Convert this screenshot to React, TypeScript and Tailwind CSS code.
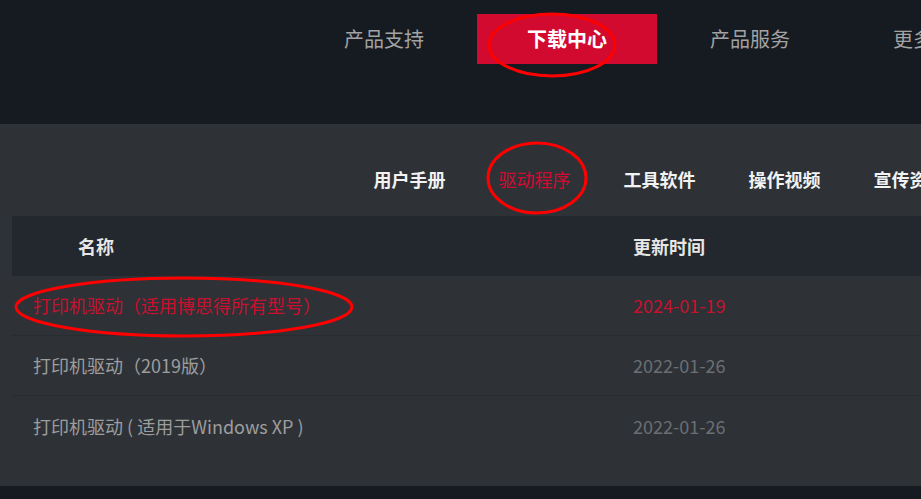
const topNav = ["产品支持", "下载中心", "产品服务", "更多产品"];
const subNav = ["用户手册", "驱动程序", "工具软件", "操作视频", "宣传资料"];

const rows = [
  { name: "打印机驱动（适用博思得所有型号）", date: "2024-01-19", active: true },
  { name: "打印机驱动（2019版）", date: "2022-01-26", active: false },
  { name: "打印机驱动 ( 适用于Windows XP )", date: "2022-01-26", active: false },
];

export default function App() {
  return (
    <div
      className="relative h-[499px] w-full overflow-hidden bg-[#161a21]"
      style={{ fontFamily: '"Noto Sans CJK SC", "Noto Sans", sans-serif' }}
    >
      {/* top nav */}
      <div className="h-[124px] bg-[#161a21]">
        <div className="flex gap-[3px] pl-[294px] pt-[14px]">
          {topNav.map((item) => {
            const active = item === "下载中心";
            return (
              <div
                key={item}
                className={
                  active
                    ? "flex h-[50px] w-[180px] shrink-0 items-center justify-center bg-[#d20a30] text-[20px] font-bold text-white"
                    : "flex h-[50px] w-[180px] shrink-0 items-center justify-center text-[20px] text-[#a3a3a3]"
                }
              >
                {item}
              </div>
            );
          })}
        </div>
      </div>

      {/* content */}
      <div className="bg-[#2e3237] pb-[30px]">
        <div className="flex pb-[25px] pl-[347px] pt-[43px]">
          {subNav.map((item) => (
            <div
              key={item}
              className={
                item === "驱动程序"
                  ? "w-[125px] shrink-0 text-center text-[18px] leading-[24px] text-[#d20a30]"
                  : "w-[125px] shrink-0 text-center text-[18px] font-bold leading-[24px] text-[#f2f2f2]"
              }
            >
              {item}
            </div>
          ))}
        </div>

        <div className="ml-[12px]">
          <div className="flex h-[60px] items-center bg-[#23282e] text-[18px] font-bold text-[#e6e6e6]">
            <div className="w-[621px] shrink-0 pl-[66px]">名称</div>
            <div>更新时间</div>
          </div>
          {rows.map((row, i) => (
            <div
              key={row.name}
              className={
                i < rows.length - 1
                  ? "flex h-[60px] items-center border-b border-[#282c31] text-[18px]"
                  : "flex h-[60px] items-center text-[18px]"
              }
            >
              <div
                className={
                  row.active
                    ? "w-[621px] shrink-0 pl-[21px] text-[#c8102e]"
                    : "w-[621px] shrink-0 pl-[21px] text-[#9d9d9d]"
                }
              >
                {row.name}
              </div>
              <div className={row.active ? "text-[#c8102e]" : "text-[#6b6e72]"}>
                {row.date}
              </div>
            </div>
          ))}
        </div>
      </div>

      {/* red annotation marks */}
      <svg
        className="pointer-events-none absolute left-0 top-0"
        width="921"
        height="499"
        viewBox="0 0 921 499"
      >
        <ellipse cx="552" cy="45" rx="63" ry="31" fill="none" stroke="#ff0000" strokeWidth="3" />
        <ellipse cx="537" cy="178" rx="49" ry="35" fill="none" stroke="#ff0000" strokeWidth="3" />
        <ellipse cx="184" cy="307" rx="168" ry="29" fill="none" stroke="#ff0000" strokeWidth="3" />
      </svg>
    </div>
  );
}
